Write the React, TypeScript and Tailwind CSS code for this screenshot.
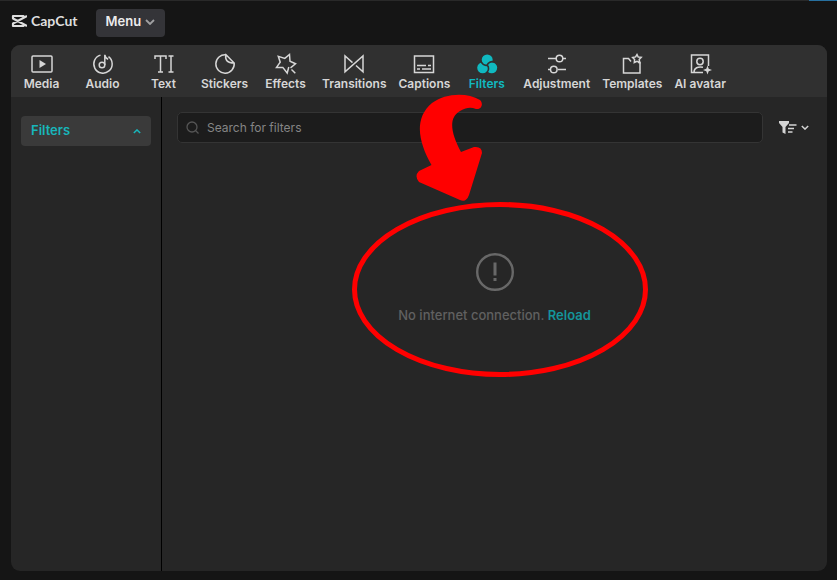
import type { ReactNode } from "react";

function Icon({ children }: { children: ReactNode }) {
  return (
    <svg
      className="size-6"
      viewBox="0 0 24 24"
      fill="none"
      stroke="currentColor"
      strokeWidth="1.5"
      aria-hidden="true"
    >
      {children}
    </svg>
  );
}

const tabs: { label: string; icon: ReactNode }[] = [
  {
    label: "Media",
    icon: (
      <Icon>
        <rect x="2" y="4" width="20" height="16" rx="1" />
        <path d="M9.500 8v8l6.500-4z" fill="currentColor" stroke="none" />
      </Icon>
    ),
  },
  {
    label: "Audio",
    icon: (
      <Icon>
        <path d="M9.500 3.100A9.200 9.200 0 1 0 17.500 4.600" />
        <circle cx="11" cy="13" r="2.800" />
        <path d="M13.800 13V2.800q.6 3.400 3.400 4.400" />
      </Icon>
    ),
  },
  {
    label: "Text",
    icon: (
      <Icon>
        <path d="M3 7V4h11v3M8.500 4v16M6 20h5M16.500 4h5M19 4v16M16.500 20h5" />
      </Icon>
    ),
  },
  {
    label: "Stickers",
    icon: (
      <Icon>
        <path d="M13 2.800A9.200 9.200 0 1 0 21.200 11L13 2.800q-2 8 8.200 8.200" />
      </Icon>
    ),
  },
  {
    label: "Effects",
    icon: (
      <Icon>
        <path d="M16.500 15.800 21.500 11.800 16 9.300 15.500 2.500 10.800 6.400 4.300 4.300 6.200 10.200 2.500 15.400 8.800 15.400 13.200 21 14.800 15" />
        <path d="m17.500 17.500 3.800 3.800" />
      </Icon>
    ),
  },
  {
    label: "Transitions",
    icon: (
      <Icon>
        <path d="m14 13.500 7 6.300V4L3 19.800V4l7.500 6.600" />
      </Icon>
    ),
  },
  {
    label: "Captions",
    icon: (
      <Icon>
        <rect x="2.500" y="4" width="19" height="16.500" />
        <path d="M5 13.500h9M16 13.500h3M5 17h3M10 17h9" />
      </Icon>
    ),
  },
  {
    label: "Filters",
    icon: (
      <Icon>
        <g fill="currentColor" stroke="none">
          <circle cx="12.200" cy="8" r="5.500" />
          <circle cx="7.700" cy="15.800" r="5.500" />
          <circle cx="16.700" cy="15.800" r="5.500" />
        </g>
        <g stroke="#303030" strokeWidth="1.600">
          <path d="M12.200 13.200C9.500 14 6.500 12 5.800 8.500" />
          <path d="M12.200 13.200C9.500 14 6.500 12 5.800 8.500" transform="rotate(120 12.200 13.200)" />
          <path d="M12.200 13.200C9.500 14 6.500 12 5.800 8.500" transform="rotate(240 12.200 13.200)" />
        </g>
      </Icon>
    ),
  },
  {
    label: "Adjustment",
    icon: (
      <Icon>
        <path d="M3 6.500h8M18 6.500h3M3 17.500h2M13 17.500h8" />
        <circle cx="14.500" cy="6.500" r="3.300" />
        <circle cx="8.800" cy="17.500" r="3.300" />
      </Icon>
    ),
  },
  {
    label: "Templates",
    icon: (
      <Icon>
        <path d="M11 9.500 8.500 6.500H3.500V21H20V10.500h-2" />
        <path d="m17 2.500 1.200 2.500 3 .3-2 2.200.5 3-2.700-1.200-2.700 1.200.3-2.900-2-2.200 3-.5z" />
      </Icon>
    ),
  },
  {
    label: "AI avatar",
    icon: (
      <Icon>
        <path d="M15 20.500H3.500V3H20.500v11" />
        <circle cx="12" cy="9.500" r="3.200" />
        <path d="M6 20.500c0-5 4-6 9-5.200" />
        <path
          d="m19.500 13.500 1.200 3.300 3.300 1.200-3.300 1.200-1.200 3.300-1.200-3.300-3.300-1.200 3.300-1.200z"
          fill="currentColor"
          stroke="none"
        />
      </Icon>
    ),
  },
];

function Chevron({ up = false, className = "" }: { up?: boolean; className?: string }) {
  return (
    <svg className={className} viewBox="0 0 10 6" fill="none" stroke="currentColor" strokeWidth="1.8" aria-hidden="true">
      <path d={up ? "M1 5l4-4 4 4" : "M1 1l4 4 4-4"} />
    </svg>
  );
}

function TitleBar() {
  return (
    <header className="flex h-11 items-center gap-[18px] pl-[11px]">
      <div className="flex items-center gap-1 pb-1 text-[#dedede]">
        <svg className="h-[14px] w-4" viewBox="0 0 16 14" fill="none" stroke="currentColor" strokeWidth="2.2" aria-hidden="true">
          <path d="M12.500 4.500V2H2V4.500L16 12M12.500 9.500V12H2V9.500L16 2" strokeLinejoin="round" />
        </svg>
        <span className="font-['Lato','Liberation_Sans',sans-serif] text-sm leading-4 font-bold">CapCut</span>
      </div>
      <button type="button" className="flex h-7 items-center gap-1 rounded bg-[#343438] px-[10px] pb-[2px] text-[13px] font-semibold text-[#ececec]">
        Menu
        <Chevron className="h-[6px] w-[10px] text-[#a0a0a2]" />
      </button>
    </header>
  );
}

function Toolbar() {
  return (
    <nav aria-label="Library" className="flex h-[52px] shrink-0 bg-[#303030]">
      {tabs.map(({ label, icon }) => (
        <button
          key={label}
          type="button"
          className={`flex min-w-[61px] flex-col items-center px-[6px] pt-[7px] text-xs leading-4 font-semibold ${
            label === "Filters" ? "text-[#10b9c0]" : "text-[#d6d6d6]"
          }`}
        >
          {icon}
          {label}
        </button>
      ))}
    </nav>
  );
}

function Annotation() {
  return (
    <svg
      className="pointer-events-none absolute -top-[3px] left-[190px] h-[290px] w-[300px]"
      viewBox="352 94 300 290"
      aria-hidden="true"
    >
      <path
        d="M480 100C467 92 445 93 432 103C413 119 419 143 431.500 165L419 171Q414 176 419 182L460 200Q466 203 469 195L482 153Q482 146 474 147L461 152C451 133 448 118 460 111C467 107 471 107 476 109C481 110 484 104 480 100Z"
        fill="#ff0000"
      />
      <ellipse cx="500" cy="289.500" rx="145.500" ry="85" fill="none" stroke="#ff0000" strokeWidth="5" />
    </svg>
  );
}

export default function App() {
  return (
    <div className="flex min-h-screen flex-col border-t border-[#292929] bg-[#151515] pr-[10px] pb-[9px] font-['Inter','Liberation_Sans',sans-serif]">
      <TitleBar />
      <div className="ml-[11px] flex flex-1 flex-col overflow-hidden rounded-[9px] bg-[#262626]">
        <Toolbar />
        <div className="flex flex-1">
          <aside className="w-[151px] shrink-0 border-r border-black px-[10px] pt-[19px]">
            <button type="button" className="flex h-[30px] w-full items-center justify-between rounded bg-[#3a3a3a] px-[10px] text-[13px] font-semibold text-[#18b6bb]">
              Filters
              <Chevron up className="h-[5px] w-2" />
            </button>
          </aside>
          <main className="relative min-w-0 flex-1 pt-[15px]">
            <div className="flex items-center gap-4 pr-[18px] pl-[15px]">
              <label className="flex h-[31px] flex-1 items-center gap-2 rounded-[5px] border border-[#343434] bg-[#1c1c1c] px-2">
                <svg className="size-[13px] text-[#555555]" viewBox="0 0 13 13" fill="none" stroke="currentColor" strokeWidth="1.3" aria-hidden="true">
                  <circle cx="6" cy="6" r="5" />
                  <path d="m9.500 9.500 3 3" />
                </svg>
                <input
                  type="text"
                  aria-label="Search for filters"
                  placeholder="Search for filters"
                  className="min-w-0 flex-1 bg-transparent text-xs text-[#dddddd] outline-none placeholder:text-[#858585]"
                />
              </label>
              <button type="button" aria-label="Filter and sort" className="flex items-center gap-1 text-[#d4d4d4]">
                <svg className="h-[13px] w-[18px]" viewBox="0 0 18 13" aria-hidden="true">
                  <path d="M0 0h10v2L6.500 6v7l-3-1.500V6L0 2z" fill="currentColor" />
                  <path d="M10 4h7.500M9 7.500h6M9 11h4.500" fill="none" stroke="currentColor" strokeWidth="1.500" />
                </svg>
                <Chevron className="h-[5px] w-2" />
              </button>
            </div>
            <section className="flex flex-col items-center pt-[110px]">
              <svg className="size-[38px] text-[#686868]" viewBox="0 0 38 38" fill="none" stroke="currentColor" aria-hidden="true">
                <circle cx="19" cy="19" r="17.800" strokeWidth="2.400" />
                <path d="M19 9.500v13M19 25v3" strokeWidth="3" />
              </svg>
              <p className="mt-[14px] text-[13px] leading-5 font-medium text-[#606060]">
                No internet connection.{" "}
                <a href="#reload" className="font-semibold text-[#14949a]">
                  Reload
                </a>
              </p>
            </section>
            <Annotation />
          </main>
        </div>
      </div>
      <div className="absolute top-0 right-0 h-px w-7 bg-[#27709f]" />
    </div>
  );
}
